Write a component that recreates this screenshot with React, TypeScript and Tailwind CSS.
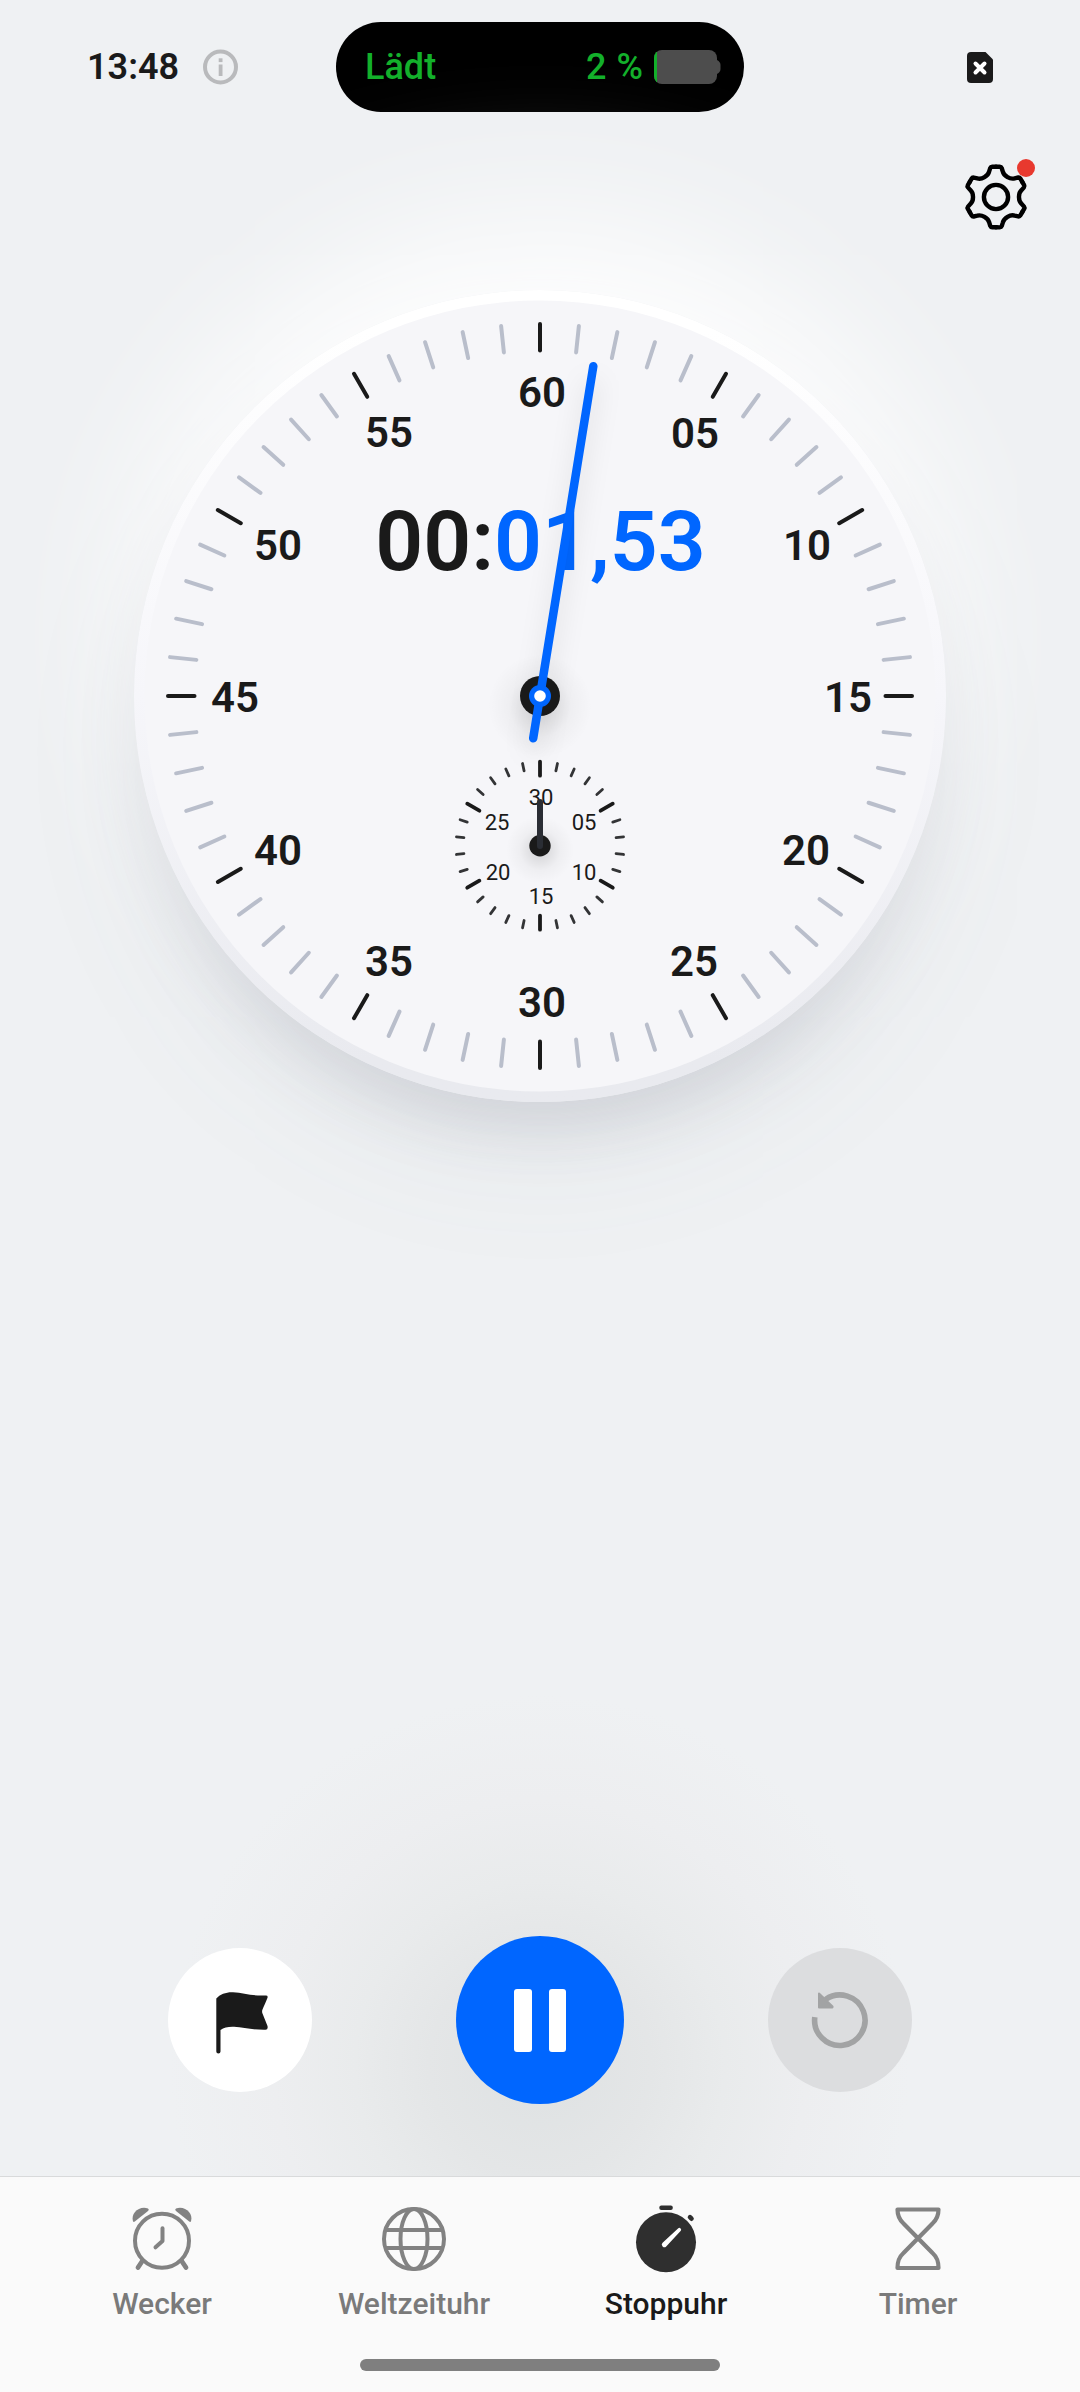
import React from 'react';

const CENTER = 406;

const polar = (cx: number, cy: number, radius: number, degrees: number) => {
  const rad = (degrees * Math.PI) / 180;
  return { x: cx + radius * Math.sin(rad), y: cy - radius * Math.cos(rad) };
};

const dialNumbers = [
  { label: '60', x: 408, y: 117 },
  { label: '05', x: 561, y: 157.5 },
  { label: '10', x: 673, y: 269.5 },
  { label: '15', x: 714, y: 422 },
  { label: '20', x: 672, y: 574.5 },
  { label: '25', x: 560, y: 686 },
  { label: '30', x: 408, y: 727 },
  { label: '35', x: 255, y: 686 },
  { label: '40', x: 144, y: 574.5 },
  { label: '45', x: 101, y: 422 },
  { label: '50', x: 144, y: 269.5 },
  { label: '55', x: 255, y: 157 },
];

const minuteNumbers = [
  { label: '30', x: 407, y: 515 },
  { label: '05', x: 450, y: 540 },
  { label: '10', x: 450, y: 590 },
  { label: '15', x: 407, y: 614 },
  { label: '20', x: 364, y: 590 },
  { label: '25', x: 363, y: 540 },
];

interface TickProps {
  cx: number;
  cy: number;
  from: number;
  to: number;
  angle: number;
  color: string;
  width: number;
}

const Tick = ({ cx, cy, from, to, angle, color, width }: TickProps) => {
  const a = polar(cx, cy, from, angle);
  const b = polar(cx, cy, to, angle);
  return <line x1={a.x} y1={a.y} x2={b.x} y2={b.y} stroke={color} strokeWidth={width} strokeLinecap="round" />;
};

const StatusBar = () => (
  <header className="flex h-[134px] items-center pl-[87px] pr-[87px]">
    <div className="flex h-full w-[249px] items-center">
      <span className="w-[93px] text-[36px] font-semibold text-[#1a1a1a]">13:48</span>
      <svg className="ml-[23px]" width="36" height="36" viewBox="0 0 36 36">
        <circle cx="17.500" cy="18" r="15.500" fill="none" stroke="#b9babc" strokeWidth="4" />
        <rect x="15.700" y="9.300" width="3.800" height="3.800" fill="#b9babc" />
        <rect x="15.700" y="15.500" width="3.800" height="11.500" fill="#b9babc" />
      </svg>
    </div>
    <div className="flex h-[90px] w-[408px] items-center rounded-full bg-black pl-[29px] pr-[23px] text-[36px] text-[#13b02b]">
      <span className="font-medium">Lädt</span>
      <span className="ml-auto flex items-baseline gap-[10px]">
        <span className="font-medium">2</span>
        <span className="font-medium tracking-tight">%</span>
      </span>
      <svg className="ml-[12px]" width="67" height="34" viewBox="0 0 67 34">
        <defs>
          <clipPath id="battery">
            <rect width="63" height="34" rx="8" />
          </clipPath>
        </defs>
        <path d="M60 10h3q3.500 2 3.500 5v4q0 3-3.500 5h-3z" fill="#4d4d4d" />
        <g clipPath="url(#battery)">
          <rect width="63" height="34" fill="#4d4d4d" />
          <rect width="3" height="34" fill="#13b02b" />
        </g>
      </svg>
    </div>
    <svg className="ml-auto" width="26" height="31" viewBox="0 0 26 31">
      <path d="M4 0h14.500L26 7.500V27a4 4 0 0 1-4 4H4a4 4 0 0 1-4-4V4a4 4 0 0 1 4-4z" fill="#1a1a1a" />
      <path d="M8.500 11.500l9 9M17.500 11.500l-9 9" stroke="#fff" strokeWidth="4" strokeLinecap="round" />
    </svg>
  </header>
);

const SettingsButton = () => (
  <button className="relative block h-[72px] w-[72px]">
    <svg width="72" height="72" viewBox="-36 -36 72 72" fill="none" stroke="#000" strokeWidth="4.400">
      <circle r="12.100" />
      {[0, 60, 120, 180, 240, 300].map((angle) => (
        <path
          key={angle}
          transform={`rotate(${angle})`}
          strokeLinecap="round"
          d="M0-30.300H3.800Q5.200-30.300 5.700-29L6.800-25.500C7.800-21 14.300-17.300 18.700-18.700L22.300-19.500Q23.600-19.700 24.400-18.400L26.240-15.150"
        />
      ))}
    </svg>
    <span className="absolute left-[57px] top-[-2px] h-[18px] w-[18px] rounded-full bg-[#e8392e]" />
  </button>
);

const Dial = () => (
  <div className="relative h-[812px] w-[812px] rounded-full bg-linear-to-b from-white from-5% via-[#f6f6fa] via-50% to-[#e9eaef] to-95% shadow-[0_-60px_140px_0px_#ffffff,0_30px_60px_-10px_rgba(90,95,115,0.25),0_60px_140px_0px_rgba(110,115,130,0.06)]">
    <svg width="812" height="812" viewBox="0 0 812 812">
      <defs>
        <radialGradient id="hubShadow">
          <stop offset="0.25" stopColor="#000" stopOpacity="0.1" />
          <stop offset="0.6" stopColor="#000" stopOpacity="0.03" />
          <stop offset="1" stopColor="#000" stopOpacity="0" />
        </radialGradient>
        <filter id="handShadow" x="-200%" y="-20%" width="500%" height="140%">
          <feGaussianBlur stdDeviation="12" />
        </filter>
      </defs>
      <circle cx={CENTER} cy={CENTER} r="395.500" fill="#f6f6f9" />

      {Array.from({ length: 60 }, (_, i) => (
        <Tick
          key={i}
          cx={CENTER}
          cy={CENTER}
          from={345.5}
          to={372}
          angle={i * 6}
          color={i % 5 === 0 ? '#1a1a1a' : '#b9becb'}
          width={4}
        />
      ))}
      {dialNumbers.map((n) => (
        <text key={n.label} x={n.x} y={n.y} textAnchor="middle" className="fill-[#1a1a1a] text-[42px] font-semibold">
          {n.label}
        </text>
      ))}

      {/* Elapsed time */}
      <text x="406.500" y="280" textAnchor="middle" className="fill-[#1a1a1a] text-[84px] font-semibold">
        00:<tspan className="fill-[#0066ff]">01,53</tspan>
      </text>

      {/* Minute counter */}
      {Array.from({ length: 30 }, (_, i) => (
        <Tick
          key={i}
          cx={CENTER}
          cy={555.7}
          from={i % 5 === 0 ? 70 : 76.5}
          to={84}
          angle={i * 12}
          color={i % 5 === 0 ? '#1a1a1a' : '#333436'}
          width={i % 5 === 0 ? 3.8 : 2.8}
        />
      ))}
      {minuteNumbers.map((n) => (
        <text key={n.label} x={n.x} y={n.y} textAnchor="middle" className="fill-[#1a1a1a] text-[22px]">
          {n.label}
        </text>
      ))}
      <circle cx={CENTER} cy="560" r="34" fill="url(#hubShadow)" />
      <circle cx={CENTER} cy="555.700" r="10.700" fill="#1a1a1a" />
      <line x1={CENTER} y1="512" x2={CENTER} y2="556" stroke="#2a2d34" strokeWidth="6" strokeLinecap="round" />

      {/* Second hand */}
      <circle cx={CENTER} cy="416" r="52" fill="url(#hubShadow)" />
      <line x1="459" y1="90" x2="399" y2="462" stroke="#000" strokeOpacity="0.09" strokeWidth="12" filter="url(#handShadow)" />
      <circle cx={CENTER} cy={CENTER} r="20" fill="#1a1a1a" />
      <line x1="459.300" y1="76.300" x2="399.200" y2="448.300" stroke="#0066ff" strokeWidth="8.500" strokeLinecap="round" />
      <circle cx={CENTER} cy={CENTER} r="11" fill="#0066ff" />
      <circle cx={CENTER} cy={CENTER} r="5.800" fill="#fff" />
    </svg>
  </div>
);

const Controls = () => (
  <section className="relative flex h-[168px] shrink-0 items-center justify-between px-[168px]">
    <div className="absolute left-[170px] top-[-241px] h-[740px] w-[740px] rounded-full bg-[radial-gradient(closest-side,#e0e3e4_10%,#e4e6e7_30%,#e9ebec_50%,#edeef0_72%,#eff1f3_100%)]" />
    <button className="relative h-36 w-36 rounded-full bg-white">
      <svg width="144" height="144" viewBox="0 0 144 144">
        <path
          d="M48.300 50.500C52 46 59 43.800 65 44.200C76 44.800 85 48.300 97.500 47.500Q100.200 47.300 99.500 49.700C97.500 54.500 96 58 94.300 62Q93.900 63.500 94.300 65L99.500 78Q100.300 81.800 97.500 81.800C84 82 76 79.500 66 78.800C60 78.600 56 79.500 52.500 82V103.500a2.100 2.100 0 0 1-4.200 0z"
          fill="#1a1a1a"
        />
      </svg>
    </button>
    <button className="relative flex h-[168px] w-[168px] items-center justify-center gap-[17px] rounded-full bg-[#0066ff]">
      <span className="h-[63px] w-[17.5px] rounded-[3px] bg-white" />
      <span className="h-[63px] w-[17.5px] rounded-[3px] bg-white" />
    </button>
    <button className="relative h-36 w-36 rounded-full bg-[#dcdddf]">
      <svg width="144" height="144" viewBox="0 0 144 144" fill="none">
        <path d="M46.800 69.200A25.200 25.200 0 1 0 57.500 51.500" stroke="#a2a3a4" strokeWidth="5.600" />
        <path d="M51 59.500V45.500L64.500 58.500Q65 59.500 63.500 59.500z" fill="#a2a3a4" stroke="#a2a3a4" strokeWidth="2" strokeLinejoin="round" />
      </svg>
    </button>
  </section>
);

const AlarmIcon = () => (
  <svg width="72" height="72" viewBox="0 0 72 72" fill="none">
    <circle cx="36" cy="37.700" r="27" stroke="#828282" strokeWidth="4" />
    <path d="M7 18.300C4.500 10.500 13 2.500 22 5.500Q23.700 6.500 22 8L8.800 18.600Q7.500 19.600 7 18.300z" fill="#828282" />
    <path d="M65 18.300C67.500 10.500 59 2.500 50 5.500Q48.300 6.500 50 8L63.200 18.600Q64.500 19.600 65 18.300z" fill="#828282" />
    <path d="M36.500 25.200V38L29.500 44.300" stroke="#828282" strokeWidth="4" strokeLinecap="round" strokeLinejoin="round" />
    <path d="M16 58.500L12 64.500M56 58.500L60 64.500" stroke="#828282" strokeWidth="4.800" strokeLinecap="round" />
  </svg>
);

const GlobeIcon = () => (
  <svg width="72" height="72" viewBox="0 0 72 72" fill="none" stroke="#828282" strokeWidth="4">
    <circle cx="36" cy="36" r="30" />
    <ellipse cx="36" cy="36" rx="13.500" ry="30" />
    <path d="M8 27h56M8 45h56" />
  </svg>
);

const StopwatchIcon = () => (
  <svg width="72" height="72" viewBox="0 0 72 72" fill="none">
    <circle cx="36" cy="39.300" r="30" fill="#2f2f2f" />
    <rect x="29.300" y="2.500" width="13.500" height="4.500" rx="2" fill="#2f2f2f" />
    <path d="M60 14.200l1.500 1.500" stroke="#2f2f2f" strokeWidth="4.600" strokeLinecap="round" />
    <path d="M32.600 39.800L48.300 25.200a1.800 1.800 0 0 1 2.500 2.500L36.200 43.400a2.500 2.500 0 0 1-3.600-3.600z" fill="#fff" />
  </svg>
);

const HourglassIcon = () => (
  <svg width="72" height="72" viewBox="0 0 72 72" fill="none" stroke="#828282" strokeWidth="4.200" strokeLinejoin="round">
    <path d="M15.500 6.500H56.500C56.500 12 55.500 16 50.500 20.500L21.500 50C16.500 54.500 15.500 58.500 15.500 65H56.500C56.500 58.500 55.500 54.500 50.500 50L21.500 20.500C16.500 16 15.500 12 15.500 6.500z" />
  </svg>
);

const tabs = [
  { label: 'Wecker', icon: AlarmIcon, active: false },
  { label: 'Weltzeituhr', icon: GlobeIcon, active: false },
  { label: 'Stoppuhr', icon: StopwatchIcon, active: true },
  { label: 'Timer', icon: HourglassIcon, active: false },
];

const TabBar = () => (
  <nav className="relative flex h-[216px] shrink-0 flex-col border-t border-[#d9dadb] bg-[#fafafa]">
    <div className="grid grid-cols-4 px-9 pt-[26px]">
      {tabs.map((tab) => {
        const Icon = tab.icon;
        return (
          <button key={tab.label} className="flex flex-col items-center">
            <Icon />
            <span
              className={
                tab.active
                  ? 'mt-[7px] text-[30px] leading-[44px] font-medium text-[#1a1a1a]'
                  : 'mt-[7px] text-[30px] leading-[44px] font-medium text-[#7a7a7a]'
              }
            >
              {tab.label}
            </span>
          </button>
        );
      })}
    </div>
    <div className="mx-auto mt-auto mb-[21px] h-3 w-[360px] rounded-full bg-[#7f7f7f]" />
  </nav>
);

const App = () => {
  return (
    <div className="flex h-[2392px] w-[1080px] flex-col overflow-hidden bg-[#eff1f3] font-['Roboto',sans-serif]">
      <StatusBar />
      <div className="relative z-10 flex h-[156px] justify-end pr-[48px] pt-[27px]">
        <SettingsButton />
      </div>
      <main className="flex flex-1 justify-center">
        <Dial />
      </main>
      <div className="mb-[72px]">
        <Controls />
      </div>
      <TabBar />
    </div>
  );
};

export default App;
